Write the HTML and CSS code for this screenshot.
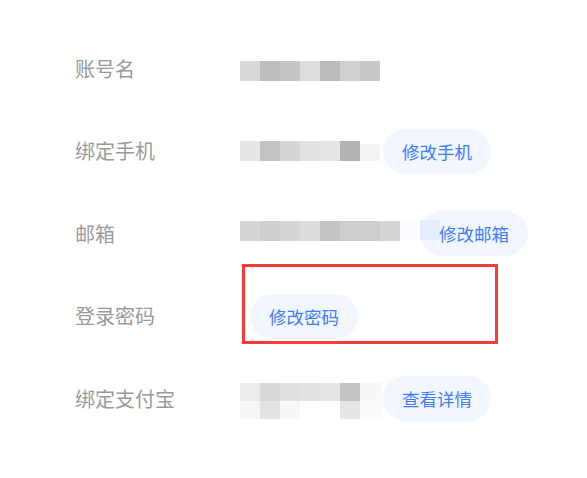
FILE: index.html
```html
<!DOCTYPE html>
<html lang="zh-CN">
<head>
<meta charset="utf-8">
<title>账号设置</title>
<link rel="stylesheet" href="styles.css">
</head>
<body>
<div class="page">
  <div class="list">
    <div class="row">
      <div class="label">账号名</div>
      <div class="mosaic mosaic-low">
        <span class="px g-d9"></span><span class="px g-bd"></span><span class="px g-c5"></span><span class="px g-dd"></span><span class="px g-bb"></span><span class="px g-d0"></span><span class="px g-c8"></span>
      </div>
    </div>
    <div class="row">
      <div class="label">绑定手机</div>
      <div class="mosaic">
        <span class="px g-e6"></span><span class="px g-c3"></span><span class="px g-d6"></span><span class="px g-e2"></span><span class="px g-e5"></span><span class="px g-b3"></span><span class="px px-tail g-f5"></span>
      </div>
      <button class="btn">修改手机</button>
    </div>
    <div class="row">
      <div class="label">邮箱</div>
      <div class="mosaic mosaic-high">
        <span class="px g-d6"></span><span class="px g-cf"></span><span class="px g-d6"></span><span class="px g-dc"></span><span class="px g-c4"></span><span class="px g-ce"></span><span class="px g-ce"></span><span class="px g-d5"></span><span class="px px-pale g-fb"></span>
      </div>
      <button class="btn btn-tinted">修改邮箱</button>
    </div>
    <div class="row">
      <div class="label">登录密码</div>
      <button class="btn btn-solo">修改密码</button>
    </div>
    <div class="row">
      <div class="label">绑定支付宝</div>
      <div class="mosaic mosaic-grid">
        <span class="cell g-ec"></span><span class="cell g-d9"></span><span class="cell g-e0"></span><span class="cell g-e2"></span><span class="cell g-e6"></span><span class="cell g-c4"></span><span class="cell cell-tail g-f8"></span>
        <span class="cell g-f6"></span><span class="cell g-e3"></span><span class="cell g-f7"></span><span class="cell g-ff"></span><span class="cell g-ff"></span><span class="cell g-e6"></span><span class="cell cell-tail g-fa"></span>
      </div>
      <button class="btn btn-flush">查看详情</button>
    </div>
  </div>
  <div class="highlight"></div>
</div>
</body>
</html>
```

FILE: styles.css
```css
html, body {
  margin: 0;
  padding: 0;
  background: #ffffff;
}

body {
  font-family: "Noto Sans CJK SC", "Noto Sans", sans-serif;
}

.page {
  position: relative;
  width: 587px;
  height: 478px;
  box-sizing: border-box;
  padding: 46px 0 0 75px;
}

.list {
  display: flex;
  flex-direction: column;
  gap: 37.5px;
}

.row {
  display: flex;
  align-items: center;
  height: 45px;
}

.label {
  width: 165px;
  flex: none;
  font-size: 20px;
  line-height: 1;
  color: #9a9a9a;
}

.mosaic {
  display: flex;
  flex: none;
}

.mosaic-low {
  margin-top: 4px;
}

.mosaic-high {
  margin-bottom: 6px;
}

.px {
  display: block;
  width: 20px;
  height: 20px;
}

.px-tail {
  height: 17px;
  margin-top: 3px;
}

.px-pale {
  width: 17px;
}

.mosaic-grid {
  display: grid;
  grid-template-columns: repeat(6, 20px) 23px;
  grid-template-rows: 18px 18px;
  margin-top: 5px;
}

.cell {
  display: block;
}

.g-b3 { background: #b3b3b3; }
.g-bb { background: #bbbbbb; }
.g-bd { background: #bdbdbd; }
.g-c3 { background: #c3c3c3; }
.g-c4 { background: #c4c4c4; }
.g-c5 { background: #c5c5c5; }
.g-c8 { background: #c8c8c8; }
.g-ce { background: #cecece; }
.g-cf { background: #cfcfcf; }
.g-d0 { background: #d0d0d0; }
.g-d5 { background: #d5d5d5; }
.g-d6 { background: #d6d6d6; }
.g-d9 { background: #d9d9d9; }
.g-dc { background: #dcdcdc; }
.g-dd { background: #dddddd; }
.g-e0 { background: #e0e0e0; }
.g-e2 { background: #e2e2e2; }
.g-e3 { background: #e3e3e3; }
.g-e5 { background: #e5e5e5; }
.g-e6 { background: #e6e6e6; }
.g-ec { background: #ececec; }
.g-f5 { background: #f5f5f5; }
.g-f6 { background: #f6f6f6; }
.g-f7 { background: #f7f7f7; }
.g-f8 { background: #f8f8f8; }
.g-fa { background: #fafafa; }
.g-fb { background: #fbfcff; }
.g-ff { background: #ffffff; }

.btn {
  position: relative;
  flex: none;
  height: 45px;
  margin-left: 3px;
  padding: 0 19px;
  border: none;
  border-radius: 22.5px;
  background: #f2f6ff;
  color: #407dfb;
  font-family: "Noto Sans CJK SC", "Noto Sans", sans-serif;
  font-size: 17.5px;
  line-height: 45px;
  cursor: pointer;
}

.btn-solo {
  margin-left: 10px;
}

.btn-flush {
  margin-left: 0;
}

.btn-tinted {
  z-index: 0;
}

.btn-tinted::before {
  content: "";
  position: absolute;
  z-index: -1;
  left: 0;
  top: 9px;
  width: 20px;
  height: 20px;
  background: #e4eeff;
}

.highlight {
  position: absolute;
  left: 242px;
  top: 264px;
  width: 256px;
  height: 80px;
  box-sizing: border-box;
  border: 3px solid #fc3a3a;
}
```
